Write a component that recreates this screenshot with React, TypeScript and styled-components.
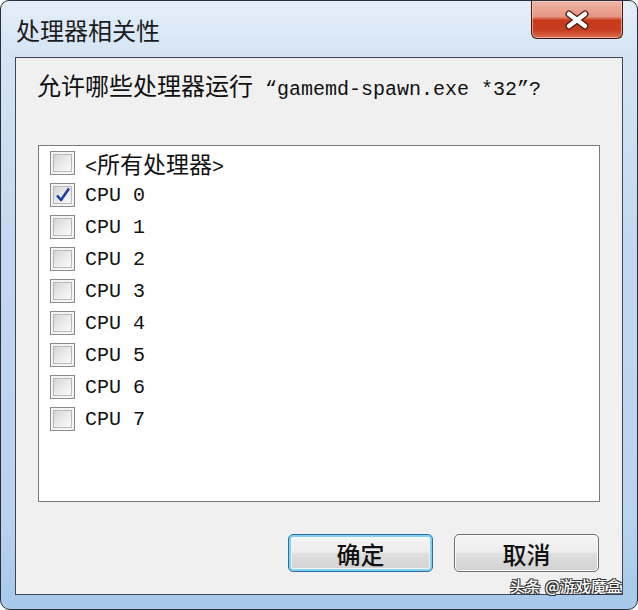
import React from "react";
import styled, { createGlobalStyle } from "styled-components";

const GlobalStyle = createGlobalStyle`
  html, body {
    margin: 0;
    padding: 0;
    background: #ffffff;
  }
  * {
    box-sizing: border-box;
  }
`;

const cjk = `"Noto Sans CJK SC", "Noto Sans", sans-serif`;
const mono = `"Liberation Mono", "Noto Sans CJK SC", monospace`;

const Window = styled.div`
  position: relative;
  width: 638px;
  height: 610px;
  border: 1px solid #25303c;
  border-radius: 9px 9px 10px 10px;
  padding: 0 14px 14px 14px;
  display: flex;
  flex-direction: column;
  background: linear-gradient(
    180deg,
    #e4eef9 0%,
    #d5e4f4 9%,
    #c3d8ef 40%,
    #bad3ee 85%,
    #a6c8ea 100%
  );
  overflow: hidden;
`;

const TitleBar = styled.div`
  height: 56px;
  display: flex;
  justify-content: space-between;
  align-items: flex-start;
`;

const Title = styled.div`
  margin-top: 13px;
  padding-left: 1px;
  font-family: ${cjk};
  font-size: 24px;
  line-height: 32px;
  color: #1c1c1c;
`;

const CloseButton = styled.div`
  width: 92px;
  height: 38px;
  border: 1px solid #3e1a12;
  border-top: none;
  border-radius: 0 0 6px 6px;
  display: flex;
  align-items: center;
  justify-content: center;
  background: linear-gradient(
    180deg,
    #efb6a7 0%,
    #e59581 42%,
    #c9391c 52%,
    #c63d1f 78%,
    #dc6d50 100%
  );
  box-shadow: inset 0 0 0 1px rgba(255, 220, 210, 0.55);
`;

const Client = styled.div`
  flex: 1;
  display: flex;
  flex-direction: column;
  background: #f0f0f0;
  border: 1px solid #3b4754;
  padding: 12px 22px 20px 21px;
`;

const Prompt = styled.div`
  display: flex;
  align-items: baseline;
  height: 30px;
  line-height: 30px;
  color: #111;
  white-space: nowrap;
`;

const Cjk = styled.span<{ size: number }>`
  font-family: ${cjk};
  font-size: ${(p) => p.size}px;
`;

const Mono = styled.span<{ size: number }>`
  font-family: ${mono};
  font-size: ${(p) => p.size}px;
`;

const ListBox = styled.div`
  margin-top: 45px;
  margin-left: 1px;
  height: 357px;
  background: #ffffff;
  border: 1px solid #7a7a7a;
  padding: 1px 0 0 11px;
`;

const Row = styled.div`
  height: 32px;
  display: flex;
  align-items: center;
  gap: 10px;
  color: #111;
`;

const Box = styled.div`
  width: 25px;
  height: 24px;
  border: 1px solid #8a8a8a;
  background: #f4f4f4;
  display: flex;
  align-items: center;
  justify-content: center;
  padding: 2px;
`;

const BoxInner = styled.div`
  width: 100%;
  height: 100%;
  border: 1px solid #b8b8b8;
  background: linear-gradient(135deg, #d3d3d3 0%, #e8e8e8 45%, #fafafa 100%);
  display: flex;
  align-items: center;
  justify-content: center;
`;

const ButtonRow = styled.div`
  margin-top: 32px;
  display: flex;
  justify-content: flex-end;
  gap: 21px;
  padding-right: 1px;
`;

const Button = styled.div<{ focused?: boolean }>`
  width: 145px;
  height: 38px;
  border-radius: 5px;
  border: 1px solid ${(p) => (p.focused ? "#2e6fa3" : "#6f6f6f")};
  background: linear-gradient(
    180deg,
    #f6f6f6 0%,
    #ececec 48%,
    #dedede 52%,
    #d2d2d2 100%
  );
  box-shadow: ${(p) =>
    p.focused
      ? "inset 0 0 0 2px #7fd2f4, inset 0 0 0 3px #f6f6f6"
      : "inset 0 0 0 1px #fafafa"};
  display: flex;
  align-items: center;
  justify-content: center;
  font-family: ${cjk};
  font-size: 24px;
  font-weight: 500;
  color: #111;
`;

const Watermark = styled.div`
  position: absolute;
  right: 15px;
  bottom: 14px;
  font-family: ${cjk};
  font-size: 15px;
  font-weight: 500;
  line-height: 18px;
  color: #ffffff;
  text-shadow: 1px 1px 0 #333, -1px -1px 0 #333, 1px -1px 0 #333,
    -1px 1px 0 #333;
  letter-spacing: 0.5px;
`;

const CloseIcon = () => (
  <svg width="26" height="20" viewBox="0 0 26 20">
    <path
      d="M5 4 L21 16 M21 4 L5 16"
      stroke="#4a1b12"
      strokeWidth="7"
      strokeLinecap="round"
      fill="none"
    />
    <path
      d="M5 4 L21 16 M21 4 L5 16"
      stroke="#ffffff"
      strokeWidth="4.5"
      strokeLinecap="round"
      fill="none"
    />
  </svg>
);

const CheckMark = () => (
  <svg width="16" height="16" viewBox="0 0 16 16">
    <path
      d="M2 8.5 L6 13 L14 1.5"
      stroke="#1e3f9a"
      strokeWidth="2.6"
      strokeLinejoin="round"
      fill="none"
    />
  </svg>
);

const CheckBox = ({ checked }: { checked?: boolean }) => (
  <Box>
    <BoxInner>{checked && <CheckMark />}</BoxInner>
  </Box>
);

const cpus = [0, 1, 2, 3, 4, 5, 6, 7];

const App = () => {
  return (
    <>
      <GlobalStyle />
      <Window>
        <TitleBar>
          <Title>处理器相关性</Title>
          <CloseButton>
            <CloseIcon />
          </CloseButton>
        </TitleBar>
        <Client>
          <Prompt>
            <Cjk size={24}>允许哪些处理器运行</Cjk>
            <Mono size={20}>&nbsp;“gamemd-spawn.exe *32”?</Mono>
          </Prompt>
          <ListBox>
            <Row>
              <CheckBox />
              <span>
                <Mono size={20}>&lt;</Mono>
                <Cjk size={23}>所有处理器</Cjk>
                <Mono size={20}>&gt;</Mono>
              </span>
            </Row>
            {cpus.map((n) => (
              <Row key={n}>
                <CheckBox checked={n === 0} />
                <Mono size={20}>CPU {n}</Mono>
              </Row>
            ))}
          </ListBox>
          <ButtonRow>
            <Button focused>确定</Button>
            <Button>取消</Button>
          </ButtonRow>
        </Client>
        <Watermark>头条 @游戏魔盒</Watermark>
      </Window>
    </>
  );
};

export default App;
